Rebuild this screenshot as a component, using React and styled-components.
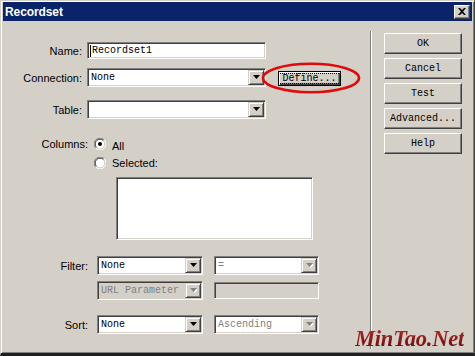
import React from "react";
import styled, { createGlobalStyle, css } from "styled-components";

const GlobalStyle = createGlobalStyle`
  html, body { margin: 0; padding: 0; background: #d4d0c8; }
  body { font-family: "Liberation Sans", Arial, sans-serif; }
  * { box-sizing: border-box; }
`;

const mono = css`
  font-family: "Liberation Mono", "Courier New", monospace;
  font-size: 10px;
`;

const sunken = css`
  border: 1px solid;
  border-color: #808080 #ffffff #ffffff #808080;
  box-shadow: inset 1px 1px #404040, inset -1px -1px #d4d0c8;
`;

const raised = css`
  background: #d4d0c8;
  border: 1px solid;
  border-color: #ffffff #404040 #404040 #ffffff;
  box-shadow: inset -1px -1px #808080, inset 1px 1px #d4d0c8;
`;

const Window = styled.div`
  position: relative;
  width: 475px;
  height: 356px;
  background: #d4d0c8;
  border-top: 1px solid #d4d0c8;
  border-left: 1px solid #d4d0c8;
  border-right: 1px solid #404040;
  border-bottom: 3px solid #202020;
  box-shadow: inset 1px 1px #ffffff, inset -1px -1px #808080;
  padding: 1px 2px 2px 2px;
  display: flex;
  flex-direction: column;
  overflow: hidden;
`;

const TitleBar = styled.div`
  height: 19px;
  background: #0a246a;
  display: flex;
  align-items: center;
  justify-content: space-between;
  padding: 0 2px 0 2px;
`;

const TitleText = styled.div`
  color: #ffffff;
  font-weight: bold;
  font-size: 12px;
  letter-spacing: -0.1px;
`;

const CloseBtn = styled.div`
  ${raised};
  width: 16px;
  height: 14px;
  display: flex;
  align-items: center;
  justify-content: center;
`;

const Body = styled.div`
  flex: 1;
  display: flex;
`;

const LeftPanel = styled.div`
  width: 367px;
  display: flex;
  flex-direction: column;
`;

const Separator = styled.div`
  width: 2px;
  margin: 10px 0 2px 0;
  border-left: 1px solid #808080;
  border-right: 1px solid #ffffff;
`;

const RightPanel = styled.div`
  flex: 1;
  display: flex;
  flex-direction: column;
  gap: 4px;
  padding: 12px 0 0 12px;
`;

const Field = styled.div`
  display: flex;
  align-items: center;
  height: 19px;
  margin-top: ${(p) => p.$mt || 0}px;
`;

const Label = styled.div`
  width: ${(p) => p.$w}px;
  margin-right: ${(p) => p.$gap}px;
  text-align: right;
  font-size: 11px;
  color: #000;
  line-height: 16px;
  align-self: ${(p) => (p.$top ? "flex-start" : "center")};
`;

const TextBox = styled.div`
  ${sunken};
  width: ${(p) => p.$w}px;
  height: 17px;
  background: ${(p) => (p.$disabled ? "#d4d0c8" : "#ffffff")};
  display: flex;
  align-items: center;
  padding-left: 2px;
  ${mono};
  color: #000;
`;

const Caret = styled.span`
  display: inline-block;
  width: 1px;
  height: 12px;
  background: #000;
  margin-right: 1px;
`;

const SelectBox = styled.div`
  ${sunken};
  width: ${(p) => p.$w}px;
  height: 19px;
  padding: 1px;
  display: flex;
  background: ${(p) => (p.$grey ? "#d4d0c8" : "#ffffff")};
  margin-right: ${(p) => p.$mr || 0}px;
`;

const SelectText = styled.div`
  flex: 1;
  display: flex;
  align-items: center;
  padding-left: 2px;
  ${mono};
  color: ${(p) => (p.$dim ? "#808080" : "#000000")};
`;

const ArrowBtn = styled.div`
  width: 16px;
  height: 100%;
  background: #d4d0c8;
  border: 1px solid;
  border-color: #d4d0c8 #404040 #404040 #d4d0c8;
  box-shadow: inset 1px 1px #ffffff, inset -1px -1px #808080;
  display: flex;
  align-items: center;
  justify-content: center;
`;

const PushButton = styled.div`
  ${raised};
  width: 78px;
  height: 21px;
  display: flex;
  align-items: center;
  justify-content: center;
  ${mono};
  color: #000;
`;

const DefineWrap = styled.div`
  position: relative;
  margin-left: 12px;
  margin-top: 2px;
`;

const DefineButton = styled.div`
  width: 63px;
  height: 15px;
  background: #d4d0c8;
  border: 1px solid #000;
  box-shadow: inset 1px 1px #ffffff, inset -1px -1px #404040, inset -2px -2px #808080;
  display: flex;
  align-items: center;
  justify-content: center;
  ${mono};
  color: #000;
`;

const FocusRect = styled.span`
  outline: 1px dotted #000;
  line-height: 9px;
  padding: 0 3px;
`;

const Ellipse = styled.svg`
  position: absolute;
  left: -17px;
  top: -9px;
  pointer-events: none;
`;

const ColumnsBlock = styled.div`
  display: flex;
  margin-top: 17px;
`;

const RadioGroup = styled.div`
  display: flex;
  flex-direction: column;
  gap: 3px;
`;

const RadioRow = styled.div`
  display: flex;
  align-items: center;
  height: 16px;
  gap: 6px;
  font-size: 11px;
  color: #000;
`;

const RadioText = styled.span`
  position: relative;
  top: ${(p) => p.$dy || 0}px;
`;

const ListBox = styled.div`
  ${sunken};
  width: 197px;
  height: 63px;
  margin: 6px 0 0 113px;
  background: #ffffff;
`;

const Watermark = styled.div`
  position: absolute;
  left: 354px;
  top: 326px;
  font-family: "Liberation Serif", "Times New Roman", serif;
  font-style: italic;
  font-weight: bold;
  font-size: 22.5px;
  line-height: 23px;
  letter-spacing: -0.2px;
  background: linear-gradient(180deg, #b0302a 0%, #8a1a18 55%, #5e0e0e 100%);
  -webkit-background-clip: text;
  background-clip: text;
  color: transparent;
`;

const Arrow = ({ disabled }) => (
  <svg width="7" height="5" viewBox="0 0 7 5">
    {disabled && <path d="M1 1h7l-3.5 4z" fill="#ffffff" />}
    <path d="M0 0h7l-3.5 4z" fill={disabled ? "#808080" : "#000000"} />
  </svg>
);

const Select = ({ w, text, grey, dim, disabledArrow, mr }) => (
  <SelectBox $w={w} $grey={grey} $mr={mr}>
    <SelectText $dim={dim}>{text}</SelectText>
    <ArrowBtn>
      <Arrow disabled={disabledArrow} />
    </ArrowBtn>
  </SelectBox>
);

const Radio = ({ checked }) => (
  <svg width="12" height="12" viewBox="0 0 12 12">
    <circle cx="6" cy="6" r="5" fill="#ffffff" />
    <path d="M10.2 1.8A5.9 5.9 0 0 0 1.8 10.2" stroke="#808080" strokeWidth="1" fill="none" />
    <path d="M10.2 1.8A5.9 5.9 0 0 1 1.8 10.2" stroke="#ffffff" strokeWidth="1" fill="none" />
    <path d="M9.4 2.6A4.8 4.8 0 0 0 2.6 9.4" stroke="#404040" strokeWidth="1" fill="none" />
    <path d="M9.4 2.6A4.8 4.8 0 0 1 2.6 9.4" stroke="#d4d0c8" strokeWidth="1" fill="none" />
    {checked && <circle cx="6" cy="6" r="2" fill="#000000" />}
  </svg>
);

export default function App() {
  return (
    <>
      <GlobalStyle />
      <Window>
        <TitleBar>
          <TitleText>Recordset</TitleText>
          <CloseBtn>
            <svg width="8" height="7" viewBox="0 0 8 7">
              <path d="M0 0h2l2 2 2-2h2L5 3.5 8 7H6L4 5 2 7H0l3-3.5z" fill="#000" />
            </svg>
          </CloseBtn>
        </TitleBar>
        <Body>
          <LeftPanel>
            <Field $mt={20}>
              <Label $w={79} $gap={5}>Name:</Label>
              <TextBox $w={179}>
                <Caret />
                Recordset1
              </TextBox>
            </Field>
            <Field $mt={8}>
              <Label $w={79} $gap={5}>Connection:</Label>
              <Select w={179} text="None" />
              <DefineWrap>
                <DefineButton>
                  <FocusRect>Define...</FocusRect>
                </DefineButton>
                <Ellipse width="100" height="32" viewBox="0 0 100 32">
                  <ellipse cx="50" cy="16" rx="48" ry="14.3" fill="none" stroke="#e00a0a" strokeWidth="2.6" />
                </Ellipse>
              </DefineWrap>
            </Field>
            <Field $mt={13}>
              <Label $w={79} $gap={5}>Table:</Label>
              <Select w={179} text="" />
            </Field>
            <ColumnsBlock>
              <Label $w={85} $gap={6} $top>Columns:</Label>
              <RadioGroup>
                <RadioRow>
                  <Radio checked />
                  <RadioText $dy={2}>All</RadioText>
                </RadioRow>
                <RadioRow>
                  <Radio />
                  <RadioText>Selected:</RadioText>
                </RadioRow>
              </RadioGroup>
            </ColumnsBlock>
            <ListBox />
            <Field $mt={16}>
              <Label $w={85} $gap={9}>Filter:</Label>
              <Select w={106} text="None" mr={11} />
              <Select w={105} text="=" dim disabledArrow />
            </Field>
            <Field $mt={6}>
              <Label $w={85} $gap={9}></Label>
              <Select w={106} text="URL Parameter" grey dim disabledArrow mr={11} />
              <TextBox $w={105} $disabled />
            </Field>
            <Field $mt={15}>
              <Label $w={85} $gap={9}>Sort:</Label>
              <Select w={106} text="None" mr={11} />
              <Select w={105} text="Ascending" dim disabledArrow />
            </Field>
          </LeftPanel>
          <Separator />
          <RightPanel>
            <PushButton>OK</PushButton>
            <PushButton>Cancel</PushButton>
            <PushButton>Test</PushButton>
            <PushButton>Advanced...</PushButton>
            <PushButton>Help</PushButton>
          </RightPanel>
        </Body>
        <Watermark>MinTao.Net</Watermark>
      </Window>
    </>
  );
}
